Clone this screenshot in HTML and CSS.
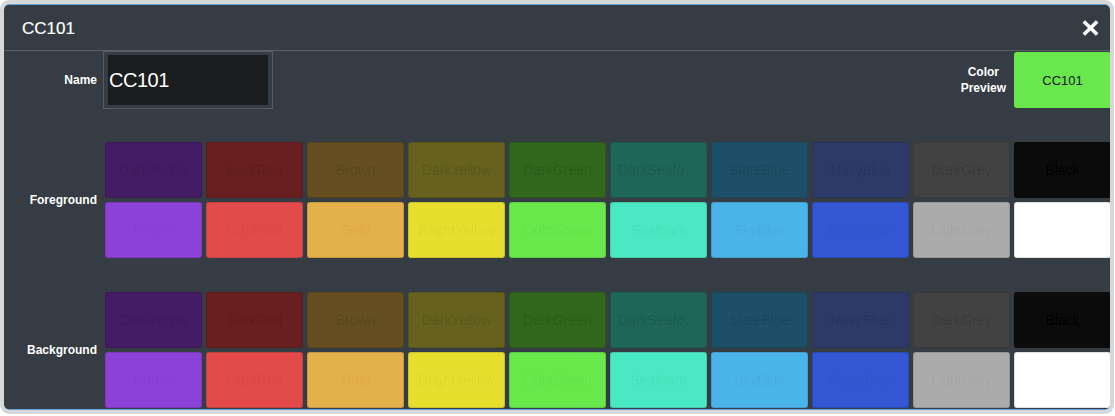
FILE: index.html
```html
<!DOCTYPE html>
<html>
<head>
<meta charset="utf-8">
<link rel="stylesheet" href="styles.css">
</head>
<body>
<div class="dialog">
  <div class="inner">
    <div class="header">
      <span class="title">CC101</span>
      <span class="close" aria-label="Close">
        <svg width="17" height="16" viewBox="0 0 17 16"><path d="M1.8 1.5 L15.2 14.5 M15.2 1.5 L1.8 14.5" stroke="#fff" stroke-width="3.6" fill="none"/></svg>
      </span>
    </div>
    <div class="name-row">
      <div class="label">Name</div>
      <div class="input"><div class="input-field">CC101</div></div>
      <div class="preview-group">
        <div class="preview-label">Color<br>Preview</div>
        <div class="preview">CC101</div>
      </div>
    </div>
    <div class="section fg">
      <div class="label">Foreground</div>
      <div class="grid">
        <div class="tile dark c-darkpurple">DarkPurple</div>
        <div class="tile dark c-darkred">DarkRed</div>
        <div class="tile dark c-brown">Brown</div>
        <div class="tile dark c-darkyellow">DarkYellow</div>
        <div class="tile dark c-darkgreen">DarkGreen</div>
        <div class="tile dark c-darkseafoam">DarkSeafoam</div>
        <div class="tile dark c-slateblue">SlateBlue</div>
        <div class="tile dark c-navyblue">NavyBlue</div>
        <div class="tile dark c-darkgrey">DarkGrey</div>
        <div class="tile dark c-black">Black</div>
        <div class="tile light c-purple">Purple</div>
        <div class="tile light c-lightred">LightRed</div>
        <div class="tile light c-gold">Gold</div>
        <div class="tile light c-brightyellow">BrightYellow</div>
        <div class="tile light c-lightgreen">LightGreen</div>
        <div class="tile light c-seafoam">Seafoam</div>
        <div class="tile light c-skyblue">SkyBlue</div>
        <div class="tile light c-royalblue">RoyalBlue</div>
        <div class="tile light c-lightgrey">LightGrey</div>
        <div class="tile light c-white">White</div>
      </div>
    </div>
    <div class="section bg">
      <div class="label">Background</div>
      <div class="grid">
        <div class="tile dark c-darkpurple">DarkPurple</div>
        <div class="tile dark c-darkred">DarkRed</div>
        <div class="tile dark c-brown">Brown</div>
        <div class="tile dark c-darkyellow">DarkYellow</div>
        <div class="tile dark c-darkgreen">DarkGreen</div>
        <div class="tile dark c-darkseafoam">DarkSeafoam</div>
        <div class="tile dark c-slateblue">SlateBlue</div>
        <div class="tile dark c-navyblue">NavyBlue</div>
        <div class="tile dark c-darkgrey">DarkGrey</div>
        <div class="tile dark c-black">Black</div>
        <div class="tile light c-purple">Purple</div>
        <div class="tile light c-lightred">LightRed</div>
        <div class="tile light c-gold">Gold</div>
        <div class="tile light c-brightyellow">BrightYellow</div>
        <div class="tile light c-lightgreen">LightGreen</div>
        <div class="tile light c-seafoam">Seafoam</div>
        <div class="tile light c-skyblue">SkyBlue</div>
        <div class="tile light c-royalblue">RoyalBlue</div>
        <div class="tile light c-lightgrey">LightGrey</div>
        <div class="tile light c-white">White</div>
      </div>
    </div>
  </div>
</div>
</body>
</html>
```
FILE: styles.css
```css
html, body {
  margin: 0;
  padding: 0;
  background: #ffffff;
}
body {
  font-family: "Liberation Sans", Arial, sans-serif;
  color: #fff;
}
.dialog {
  width: 1114px;
  height: 414px;
  box-sizing: border-box;
  border: 4px solid #d6d7d9;
  border-radius: 9px;
  overflow: hidden;
}
.inner {
  height: 406px;
  box-sizing: border-box;
  border-top: 1px solid #5fa3dc;
  border-bottom: 1px solid #5fa3dc;
  background: #353c44;
  border-radius: 5px;
  overflow: hidden;
}
.header {
  height: 46px;
  box-sizing: border-box;
  border-bottom: 1px solid #5c6169;
  display: flex;
  align-items: center;
  padding-left: 18px;
}
.title {
  font-size: 17px;
  margin-top: 3px;
  -webkit-text-stroke: 0.2px #fff;
}
.close {
  margin-left: auto;
  margin-right: 11px;
  width: 17px;
  height: 16px;
  display: flex;
}
.name-row {
  height: 58px;
  display: flex;
  align-items: center;
}
.label {
  width: 93px;
  flex-shrink: 0;
  text-align: right;
  font-size: 12px;
  font-weight: bold;
}
.input {
  margin-left: 6px;
  width: 170px;
  height: 58px;
  box-sizing: border-box;
  border: 1px solid #585d64;
  padding: 3px 4px;
}
.input-field {
  height: 50px;
  background: #1c1d1f;
  font-size: 20px;
  letter-spacing: -0.5px;
  display: flex;
  align-items: center;
  padding-left: 1px;
}
.preview-group {
  margin-left: auto;
  margin-right: -1px;
  display: flex;
  align-items: center;
  gap: 8px;
}
.preview-label {
  font-size: 12px;
  font-weight: bold;
  text-align: center;
  line-height: 16px;
}
.preview {
  width: 97px;
  height: 56px;
  background: #68e84c;
  border-radius: 3px;
  color: #111;
  font-size: 13px;
  display: flex;
  align-items: center;
  justify-content: center;
}
.section {
  display: flex;
  align-items: center;
}
.section.fg { margin-top: 33px; }
.section.bg { margin-top: 34px; }
.grid {
  margin-left: 8px;
  flex-shrink: 0;
  display: grid;
  grid-template-columns: repeat(10, 97px);
  grid-auto-rows: 56px;
  gap: 4px;
}
.tile {
  border-radius: 3px;
  box-shadow: inset 0 0 0 1px rgba(0,0,0,0.12);
  font-size: 14px;
  line-height: 55px;
  padding: 1px 8px 0;
  text-align: center;
  white-space: nowrap;
  overflow: hidden;
  text-overflow: ellipsis;
}
.tile.dark { color: rgba(0,0,0,0.13); }
.tile.light { color: rgba(0,0,0,0.05); }
.c-darkpurple { background: #441c65; }
.c-darkred { background: #691f20; }
.c-brown { background: #654f20; }
.c-darkyellow { background: #66621e; }
.c-darkgreen { background: #30671c; }
.c-darkseafoam { background: #1e6659; }
.c-slateblue { background: #1e4f68; }
.c-navyblue { background: #2d3a67; }
.c-darkgrey { background: #424242; }
.tile.c-black { background: #0b0b0b; color: #000; }
.c-purple { background: #8c42d9; }
.c-lightred { background: #e34a4a; }
.c-gold { background: #e4b049; }
.c-brightyellow { background: #e6df2d; }
.c-lightgreen { background: #68e84b; }
.c-seafoam { background: #4ae8c3; }
.c-skyblue { background: #4ab3e8; }
.c-royalblue { background: #3356d2; }
.c-lightgrey { background: #ababab; }
.tile.c-white { background: #ffffff; color: rgba(0,0,0,0); }
```
